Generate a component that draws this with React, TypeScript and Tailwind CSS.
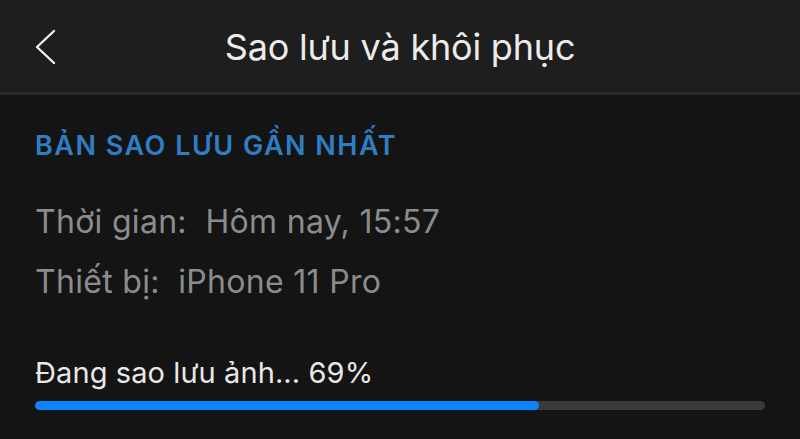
import React from 'react';

const App = () => {
  const progress = 69;

  return (
    <div
      className="w-[800px] h-[439px] bg-[#141414] overflow-hidden flex flex-col"
      style={{ fontFamily: 'Inter, "Noto Sans", sans-serif' }}
    >
      {/* header */}
      <div className="relative h-[95px] bg-[#1e1e1e] border-b-[3px] border-[#2a2a2a] flex items-center justify-center">
        <button className="absolute left-[33px] top-[29px] w-[24px] h-[36px]">
          <svg width="24" height="36" viewBox="0 0 24 36" fill="none">
            <path d="M21 2 L4 18 L21 34" stroke="#f2f2f2" strokeWidth="2.4" strokeLinecap="round" strokeLinejoin="round" />
          </svg>
        </button>
        <h1 className="text-[36px] text-[#ececec] font-normal tracking-[-0.2px] mt-[2px]">Sao lưu và khôi phục</h1>
      </div>

      {/* content */}
      <div className="flex flex-col px-[35px]">
        <div className="mt-[35px] text-[27px] font-semibold text-[#2f7ec4] leading-[32px] tracking-[1.5px]">
          BẢN SAO LƯU GẦN NHẤT
        </div>

        <div className="mt-[41px] flex flex-col gap-[22px] text-[32px] text-[#8c8c8c] leading-[38px] tracking-[0.3px]">
          <div>Thời gian:&nbsp; Hôm nay, 15:57</div>
          <div>Thiết bị:&nbsp; iPhone 11 Pro</div>
        </div>

        <div className="mt-[55px] text-[29px] text-[#e8e8e8] leading-[34px] tracking-[0.1px]">Đang sao lưu ảnh... {progress}%</div>

        <div className="mt-[11px] w-[730px] h-[9px] rounded-full bg-[#3a3a3a] overflow-hidden">
          <div className="h-full rounded-full bg-[#0a84ff]" style={{ width: `${progress}%` }} />
        </div>
      </div>
    </div>
  );
};

export default App;
